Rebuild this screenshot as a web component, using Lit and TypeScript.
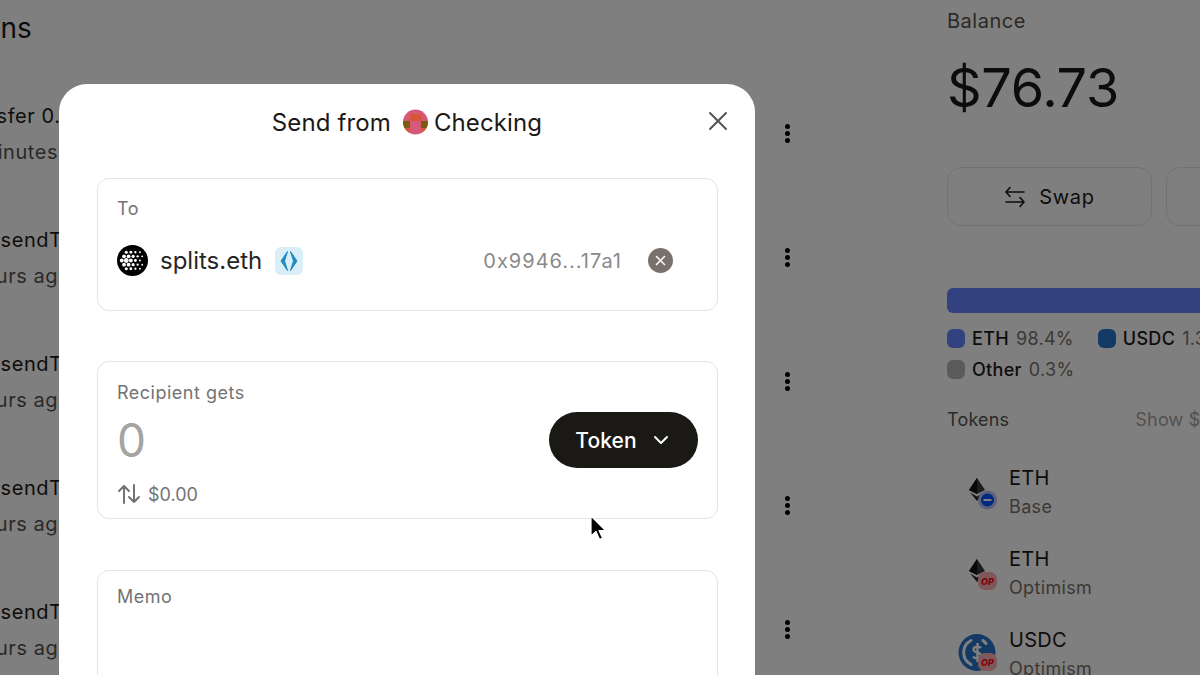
import { LitElement, html, css, svg } from "lit";
import { customElement } from "lit/decorators.js";

const rows = [
  ["Transfer 0.5 ETH", "15 minutes ago"],
  ["multisendTransaction", "2 hours ago"],
  ["multisendTransaction", "2 hours ago"],
  ["multisendTransaction", "2 hours ago"],
  ["multisendTransaction", "3 hours ago"],
];

const dots: [number, number, number][] = [];
for (let row = 0; row < 5; row++) {
  const cy = 7 + row * 4;
  for (let col = 0; col < 6; col++) {
    const cx = 4.6 + col * 4.4 + (row % 2 ? 2.2 : 0);
    const d = Math.hypot(cx - 15, cy - 15);
    const focus = Math.hypot(cx - 9, cy - 15);
    if (d < 11.5) dots.push([cx, cy, Math.max(0.9, 2.3 - focus * 0.1)]);
  }
}

const eth = svg`<path d="M8 0 L16 12 L8 16 L0 12 Z" fill="#3a3a3a"/><path d="M8 0 L8 16 L0 12 Z" fill="#111"/><path d="M1 14.500 L8 18.500 L15 14.500 L8 23 Z" fill="#2a2a2a"/>`;

@customElement("app-root")
export class AppRoot extends LitElement {
  static styles = css`
    :host { display: block; width: 1200px; height: 675px; font-family: Inter, "Liberation Sans", sans-serif; color: #1c1917; }
    .page { position: relative; display: flex; width: 1200px; height: 675px; overflow: hidden; background: #fff; }
    .main { flex: 0 0 947px; box-sizing: border-box; margin-left: -48px; padding-right: 109px; min-width: 0; }
    .h1 { margin: 10px 0 0 -90px; font-size: 28px; line-height: 36px; font-weight: 400; white-space: nowrap; }
    .list { margin-top: 56px; display: flex; flex-direction: column; }
    .tx { height: 124px; flex: none; display: flex; justify-content: space-between; align-items: flex-start; }
    .tx-name { font-size: 20px; line-height: 28px; white-space: nowrap; letter-spacing: 0.55px; }
    .tx-time { font-size: 20px; line-height: 28px; margin-top: 8px; color: #57534e; white-space: nowrap; letter-spacing: 0.55px; }
    .kebab { display: flex; flex-direction: column; gap: 3px; margin-top: 22px; }
    .kebab i { width: 5px; height: 5px; border-radius: 50%; background: #000; margin-bottom: -1px; }
    .side { flex: 1; min-width: 0; margin-left: 48px; }
    .balance-l { margin-top: 8px; font-size: 20px; line-height: 26px; color: #57534e; letter-spacing: 0.5px; }
    .balance { margin-top: 21px; font-size: 54px; line-height: 66px; white-space: nowrap; letter-spacing: -0.3px; }
    .btns { display: flex; gap: 14px; margin-top: 46px; width: 300px; }
    .btn { flex: 0 0 205px; height: 59px; box-sizing: border-box; border: 1px solid #e7e5e4; border-radius: 14px; display: flex; align-items: center; justify-content: center; gap: 13px; font-size: 20px; font-weight: 400; letter-spacing: 0.7px; }
    .bar { margin-top: 62px; height: 25px; width: 300px; border-radius: 6px 0 0 6px; background: #6482ff; }
    .legend { margin-top: 16px; display: flex; flex-direction: column; gap: 12px; width: 300px; }
    .lg-row { display: flex; }
    .lg { display: flex; align-items: center; font-size: 18px; line-height: 19px; white-space: nowrap; margin-right: 24px; }
    .sw { width: 18px; height: 19px; border-radius: 6px; margin-right: 7px; }
    .lg b { font-weight: 500; margin-right: 7px; letter-spacing: 0.3px; }
    .lg span { color: #78716c; letter-spacing: 0.3px; }
    .tokhead { margin-top: 29px; display: flex; width: 300px; font-size: 18px; line-height: 24px; color: #57534e; white-space: nowrap; letter-spacing: 0.2px; }
    .tokhead span:last-child { margin-left: 126px; color: #a8a29e; }
    .toks { margin-top: 33px; }
    .tok { display: flex; height: 81px; align-items: flex-start; }
    .tok-ic { flex: 0 0 62px; height: 50px; }
    .tok-ic svg { display: block; }
    .tok-n { font-size: 20px; line-height: 26px; white-space: nowrap; letter-spacing: 0.3px; }
    .tok-s { font-size: 18px; line-height: 24px; margin-top: 4px; color: #78716c; white-space: nowrap; letter-spacing: 0.35px; }
    .overlay { position: absolute; inset: 0; background: rgba(0, 0, 0, 0.5); }
    .modal { position: absolute; left: 59px; top: 84px; width: 696px; height: 640px; background: #fff; border-radius: 28px; padding: 0 37px 0 38px; box-sizing: border-box; }
    .title { position: relative; height: 76px; margin: 0 -37px 0 -38px; display: flex; align-items: center; justify-content: center; font-size: 24px; white-space: nowrap; letter-spacing: 0.12px; }
    .title-from { margin-right: 12px; }
    .avatar { margin-right: 6px; display: block; }
    .close { position: absolute; right: 27px; top: 27px; display: block; }
    .modal-body { margin-top: 18px; display: flex; flex-direction: column; }
    .field { flex: none; border: 1px solid #e4e4e4; border-radius: 12px; box-sizing: border-box; padding: 18px 19px; }
    .f1 { height: 133px; margin-bottom: 50px; }
    .f2 { height: 158px; padding-top: 19px; margin-bottom: 51px; }
    .f3 { height: 200px; padding-top: 14px; }
    .lab { font-size: 18px; line-height: 24px; color: #737373; letter-spacing: 0.5px; }
    .to { display: flex; align-items: center; margin-top: 24px; }
    .ens-name { font-size: 24px; margin-left: 12px; color: #262626; }
    .ens { margin-left: 13px; display: block; }
    .addr { margin-left: auto; font-size: 20px; color: #8a8a8a; letter-spacing: 1px; }
    .clear { margin-left: 26px; margin-right: 25px; display: block; }
    .amt { display: flex; align-items: center; justify-content: space-between; margin-top: 7px; height: 56px; }
    .zero { font-size: 46px; color: #a3a3a3; }
    .token { height: 56px; width: 149px; box-sizing: border-box; border-radius: 28px; background: #1a1916; color: #fff; font-size: 21px; font-weight: 500; letter-spacing: 0.1px; display: flex; align-items: center; justify-content: center; gap: 16px; padding-right: 3px; }
    .usd { display: flex; align-items: center; gap: 7px; margin-top: 15px; font-size: 18px; color: #737373; }
    .cursor { position: absolute; left: 589px; top: 515px; display: block; }
  `;

  render() {
    return html`<div class="page">
      <div class="main">
        <div class="h1">Transactions</div>
        <div class="list">
          ${rows.map(
            ([a, b]) => html`<div class="tx">
              <div><div class="tx-name">${a}</div><div class="tx-time">${b}</div></div>
              <div class="kebab"><i></i><i></i><i></i></div>
            </div>`
          )}
        </div>
      </div>
      <div class="side">
        <div class="balance-l">Balance</div>
        <div class="balance">$76.73</div>
        <div class="btns">
          <div class="btn">
            <svg width="22" height="22" viewBox="0 0 22 22" fill="none" stroke="#1c1917" stroke-width="1.6" stroke-linecap="round" stroke-linejoin="round"><path d="M20 6H2M6 1.500 2 6l4 4.500M2 16h18M16 11.500 20 16l-4 4.500"/></svg>
            Swap
          </div>
          <div class="btn"></div>
        </div>
        <div class="bar"></div>
        <div class="legend">
          <div class="lg-row">
            <div class="lg"><div class="sw" style="background:#6482ff"></div><b>ETH</b><span>98.4%</span></div>
            <div class="lg"><div class="sw" style="background:#2775ca"></div><b>USDC</b><span>1.3%</span></div>
          </div>
          <div class="lg-row">
            <div class="lg"><div class="sw" style="background:#b5b5b5"></div><b>Other</b><span>0.3%</span></div>
          </div>
        </div>
        <div class="tokhead"><span>Tokens</span><span>Show $0 balances</span></div>
        <div class="toks">
          <div class="tok">
            <div class="tok-ic"><svg width="52" height="50" viewBox="0 0 52 50">
              <g transform="translate(22,13)">${eth}</g>
              <circle cx="40.500" cy="35" r="9.500" fill="#b4c4ee"/><circle cx="40.500" cy="35" r="6.500" fill="#0052ff"/><rect x="36.500" y="34" width="8" height="2" fill="#fff"/>
            </svg></div>
            <div><div class="tok-n">ETH</div><div class="tok-s">Base</div></div>
          </div>
          <div class="tok">
            <div class="tok-ic"><svg width="52" height="50" viewBox="0 0 52 50">
              <g transform="translate(22,13)">${eth}</g>
              <rect x="31" y="26" width="19" height="18" rx="7" fill="#ffb0b5"/>
              <text x="40.500" y="38.500" text-anchor="middle" font-family="Inter, sans-serif" font-size="9" font-weight="800" font-style="italic" fill="#ff0420">OP</text>
            </svg></div>
            <div><div class="tok-n">ETH</div><div class="tok-s">Optimism</div></div>
          </div>
          <div class="tok">
            <div class="tok-ic"><svg width="52" height="50" viewBox="0 0 52 50">
              <circle cx="30" cy="25.500" r="18.500" fill="#2775ca"/>
              <path d="M24 13.500a13.500 13.500 0 0 0 0 24M36 13.500a13.500 13.500 0 0 1 3 3" fill="none" stroke="#fff" stroke-width="3" stroke-linecap="round"/>
              <path d="M34 21c-1.500-2-7.500-2-7.500 1.500s7.500 2.500 7.500 6-6 3.500-8 1M30.500 16v19" stroke="#fff" stroke-width="2.400" fill="none"/>
              <rect x="31" y="26" width="19" height="18" rx="7" fill="#ffb0b5"/>
              <text x="40.500" y="38.500" text-anchor="middle" font-family="Inter, sans-serif" font-size="9" font-weight="800" font-style="italic" fill="#ff0420">OP</text>
            </svg></div>
            <div><div class="tok-n">USDC</div><div class="tok-s">Optimism</div></div>
          </div>
        </div>
      </div>
      <div class="overlay"></div>
      <div class="modal">
        <div class="title">
          <span class="title-from">Send from</span>
          <svg class="avatar" width="25" height="26" viewBox="0 0 25 26">
            <defs><clipPath id="av"><ellipse cx="12.500" cy="13" rx="12.500" ry="12.500"/></clipPath></defs>
            <g clip-path="url(#av)">
              <rect width="25" height="26" fill="#d6597a"/>
              <rect x="7" y="5" width="12" height="7" fill="#d9553a"/>
              <rect x="0" y="12" width="7" height="7" fill="#7c5a10"/>
              <rect x="18" y="12" width="7" height="7" fill="#7c5a10"/>
              <rect x="0" y="19" width="7" height="7" fill="#d9553a"/>
              <rect x="18" y="19" width="7" height="7" fill="#d9553a"/>
            </g>
          </svg>
          <span>Checking</span>
          <svg class="close" width="20" height="20" viewBox="0 0 20 20" fill="none" stroke="#57534e" stroke-width="2" stroke-linecap="round"><path d="M2 2l16 16M18 2 2 18"/></svg>
        </div>
        <div class="modal-body">
          <div class="field f1">
            <div class="lab">To</div>
            <div class="to">
              <svg width="31" height="31" viewBox="0 0 30 30" style="display:block">
                <circle cx="15" cy="15" r="15" fill="#000"/>
                ${dots.map(([x, y, r]) => svg`<circle cx=${x} cy=${y} r=${r} fill="#fff"/>`)}
              </svg>
              <span class="ens-name">splits.eth</span>
              <svg class="ens" width="28" height="28" viewBox="0 0 28 28">
                <rect width="28" height="28" rx="6" fill="#d9eef6"/>
                <path d="M12.500 4.500 6 14l6.500 9.500-3-9.500z M15.500 4.500 22 14l-6.500 9.500 3-9.500z" fill="#1f8ac0" stroke="#1f8ac0" stroke-width="1" stroke-linejoin="round"/>
              </svg>
              <span class="addr">0x9946...17a1</span>
              <svg class="clear" width="25" height="25" viewBox="0 0 25 25" fill="none" stroke="#fff" stroke-width="1.600" stroke-linecap="round">
                <circle cx="12.500" cy="12.500" r="12.500" fill="#78716c" stroke="none"/>
                <path d="M8.500 8.500l8 8M16.500 8.500l-8 8"/>
              </svg>
            </div>
          </div>
          <div class="field f2">
            <div class="lab">Recipient gets</div>
            <div class="amt">
              <span class="zero">0</span>
              <div class="token">Token
                <svg width="16" height="10" viewBox="0 0 16 10" fill="none" stroke="#fff" stroke-width="2" stroke-linecap="round" stroke-linejoin="round"><path d="M2 2l6 6 6-6"/></svg>
              </div>
            </div>
            <div class="usd">
              <svg width="24" height="22" viewBox="0 0 24 22" fill="none" stroke="#737373" stroke-width="2" stroke-linecap="round" stroke-linejoin="round"><path d="M7 20V3M2 8l5-5 5 5M17 2v17M12 14l5 5 5-5"/></svg>
              $0.00
            </div>
          </div>
          <div class="field f3"><div class="lab">Memo</div></div>
        </div>
      </div>
      <svg class="cursor" width="20" height="28" viewBox="0 0 20 28">
        <path d="M2 1v20l5-4.500 3.500 8 3-1.500-3.500-7.500h6.500z" fill="#000" stroke="#fff" stroke-width="1.200" stroke-linejoin="round"/>
      </svg>
    </div>`;
  }
}
